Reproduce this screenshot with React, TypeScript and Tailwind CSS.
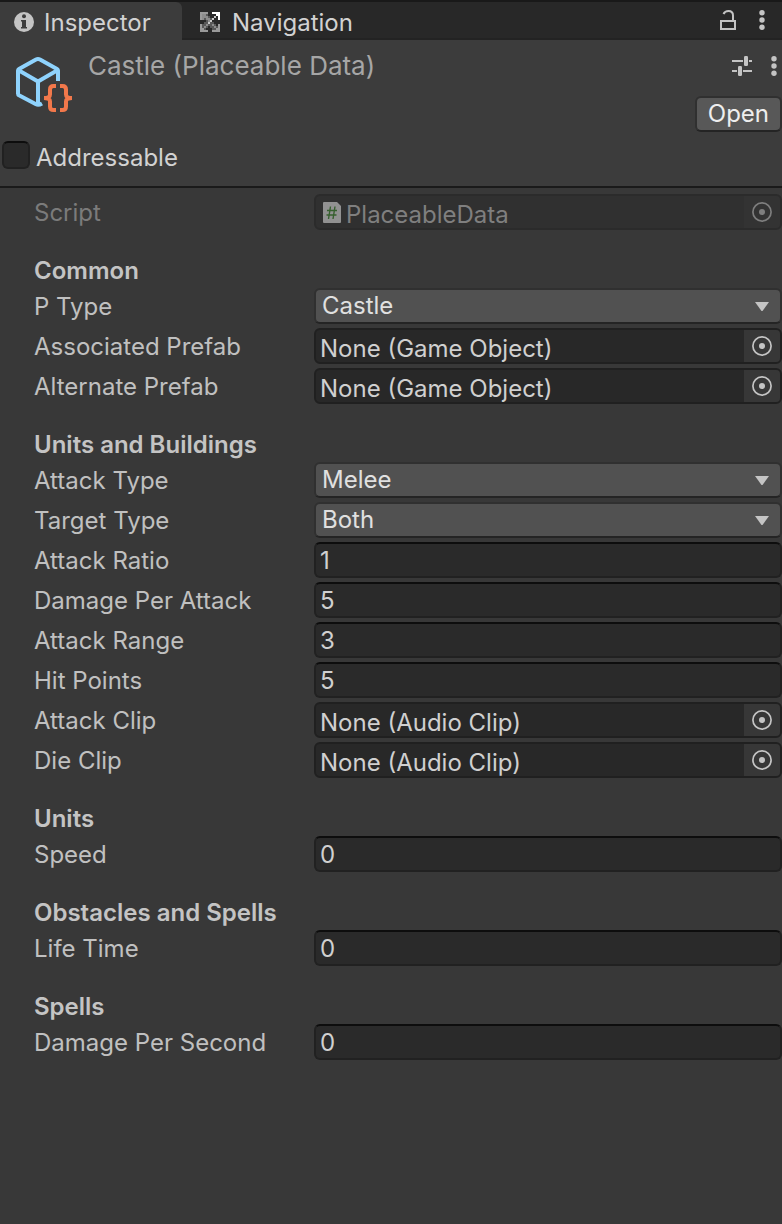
import { useId, type ReactNode } from "react";

function InfoIcon() {
  return (
    <svg viewBox="0 0 20 20" className="size-5 shrink-0" aria-hidden="true">
      <circle cx="10" cy="10" r="10" fill="#c4c4c4" />
      <circle cx="10" cy="4.2" r="2" fill="#3c3c3c" />
      <path d="M7 8h5v7h1v1.6H7V15h1V9.5H7z" fill="#3c3c3c" />
    </svg>
  );
}

function NavigationIcon() {
  return (
    <svg viewBox="0 0 20 20" className="size-5 shrink-0" shapeRendering="crispEdges" aria-hidden="true">
      <path d="M2 4h2V2h4v2h2v2h2v8h2v2h2v2h-4v-2h-2v-2H8v2H6v2H4v-2H2v-4h2v-2h2V8H4V6H2z" fill="#585858" />
      <path d="M12 10h2v2h2v2h2v4h-4v-2h-2z" fill="#585858" />
      <path d="M0 0h8v2H4v2H2v4H0zM0 12h2v4h2v2h4v2H0zM20 20h-8v-2h4v-2h2v-4h2z" fill="#9a9a9a" />
      <path d="M2 2h4v2h2v2h2v4H8V8H6V6H4v2H2zM4 14h2v-2h2v-2h2v2H8v2H6v2H4zM12 12h2v2h2v2h-2v-2h-2z" fill="#8c8c8c" />
      <path d="M8 10h2V8h2V6h2V4h2v2h-2v2h-2v2h-2v2H8z" fill="#c8c8c8" />
      <path d="M12 0h8v8h-2V4h-2V2h-4z" fill="#ffffff" />
      <path d="M16 2h2v2h-2z" fill="#ffffff" />
    </svg>
  );
}

function LockIcon() {
  return (
    <svg viewBox="0 0 16 20" className="h-5 w-4" fill="none" stroke="#c4c4c4" strokeWidth="2" aria-hidden="true">
      <rect x="1" y="11" width="14" height="8" />
      <path d="M3.500 4C4.500 1.800 6.500 1 8.500 1 11.500 1 13 3 13 5.500V11" />
    </svg>
  );
}

function DotsIcon() {
  return (
    <svg viewBox="0 0 6 20" className="h-5 w-1.5" fill="#c4c4c4" aria-hidden="true">
      <circle cx="3" cy="2.700" r="2.700" />
      <circle cx="3" cy="10" r="2.700" />
      <circle cx="3" cy="17.300" r="2.700" />
    </svg>
  );
}

function PresetIcon() {
  return (
    <svg viewBox="0 0 20 20" className="size-5" fill="#c4c4c4" aria-hidden="true">
      <path d="M0 4h11v2H0zM17 4h3v2h-3zM0 14h5v2H0zM11 14h9v2h-9z" />
      <rect x="12" y="0" width="4" height="10" rx="1.200" />
      <rect x="6" y="10" width="4" height="10" rx="1.200" />
    </svg>
  );
}

function AssetIcon() {
  return (
    <svg viewBox="0 0 56 56" className="size-14 shrink-0" fill="none" aria-hidden="true">
      <g stroke="#8fd3fd" strokeWidth="4" strokeLinejoin="round">
        <path d="M42 25V14.500Q42 13.500 41 12.900L24 3.500Q22 2.400 20 3.500L3 12.900Q2 13.500 2 14.500V37.500Q2 38.700 3 39.300L20 48.300Q22.500 49.500 26 47.500" />
        <path d="M3 14.500L22 25.500 41 14.500M22 25.500V48" />
      </g>
      <path
        d="M40 30H37.500Q34 30 34 33.500V38.500Q34 42 28 42Q34 42 34 45.500V50.500Q34 54 37.500 54H40M44 30H46.500Q50 30 50 33.500V38.500Q50 42 56 42Q50 42 50 45.500V50.500Q50 54 46.500 54H44"
        stroke="#f2784b"
        strokeWidth="4"
      />
    </svg>
  );
}

function ScriptIcon() {
  return (
    <svg viewBox="0 0 18 21" className="h-[21px] w-[18px] shrink-0" aria-hidden="true">
      <path d="M1 0H14L18 4V20Q18 21 17 21H1Q0 21 0 20V1Q0 0 1 0Z" fill="#929292" />
      <path d="M7.500 4.500L5.500 17M12 4.500L10 17M4 8.500H14M3.500 13H13.500" stroke="#37602f" strokeWidth="1.400" fill="none" />
    </svg>
  );
}

function PickerIcon() {
  return (
    <svg viewBox="0 0 20 20" className="size-5" aria-hidden="true">
      <circle cx="10" cy="10" r="9.100" fill="none" stroke="currentColor" strokeWidth="1.700" />
      <circle cx="10" cy="10" r="3" fill="currentColor" />
    </svg>
  );
}

function Row({ id, label, dim, children }: { id: string; label: string; dim?: boolean; children: ReactNode }) {
  return (
    <div className="flex h-9 items-center">
      <label htmlFor={id} className={`w-[280px] shrink-0 pt-0.5 ${dim ? "text-[#7b7b7b]" : "text-[#c0c0c0]"}`}>
        {label}
      </label>
      {children}
    </div>
  );
}

function SelectRow({ label, options }: { label: string; options: string[] }) {
  const id = useId();
  return (
    <Row id={id} label={label}>
      <div className="relative h-9 min-w-0 flex-1">
        <select
          id={id}
          defaultValue={options[0]}
          className="h-full w-full appearance-none rounded-md border-2 border-[#303030] border-b-[#242424] bg-[#515151] pr-10 pl-1.5 text-[#e0e0e0]"
        >
          {options.map((option) => (
            <option key={option}>{option}</option>
          ))}
        </select>
        <svg viewBox="0 0 14 9" className="pointer-events-none absolute top-3.5 right-[13px] h-[9px] w-3.5" aria-hidden="true">
          <path d="M0 0H14L7.500 9H6.500Z" fill="#c4c4c4" />
        </svg>
      </div>
    </Row>
  );
}

function NumberRow({ label, value }: { label: string; value: string }) {
  const id = useId();
  return (
    <Row id={id} label={label}>
      <input
        id={id}
        type="text"
        inputMode="decimal"
        defaultValue={value}
        className="h-9 min-w-0 flex-1 rounded-md border-2 border-[#212121] border-t-[#0d0d0d] bg-[#2a2a2a] px-1 text-[#d0d0d0]"
      />
    </Row>
  );
}

function ObjectRow({ label, value }: { label: string; value: string }) {
  const id = useId();
  return (
    <Row id={id} label={label}>
      <div className="flex h-9 min-w-0 flex-1 overflow-hidden rounded-md border-2 border-[#202020] bg-[#282828]">
        <input
          id={id}
          readOnly
          defaultValue={value}
          className="h-8 min-w-0 flex-1 bg-transparent px-1 pt-1 leading-7 text-[#d0d0d0]"
        />
        <button type="button" aria-label={`Select ${label}`} className="grid w-9 place-items-center bg-[#373737] text-[#c4c4c4]">
          <PickerIcon />
        </button>
      </div>
    </Row>
  );
}

function ScriptRow() {
  const id = useId();
  return (
    <Row id={id} label="Script" dim>
      <div className="flex h-9 min-w-0 flex-1 items-center overflow-hidden rounded-md border-2 border-[#2b2b2b] bg-[#303030] pl-[7px]">
        <ScriptIcon />
        <input
          id={id}
          disabled
          defaultValue="PlaceableData"
          className="h-8 min-w-0 flex-1 bg-transparent pt-1 pl-[5px] leading-7 text-[#7f7f7f]"
        />
        <button type="button" disabled aria-label="Select Script" className="grid h-full w-9 place-items-center bg-[#333333] text-[#7e7e7e]">
          <PickerIcon />
        </button>
      </div>
    </Row>
  );
}

function Section({ title, children }: { title: string; children: ReactNode }) {
  return (
    <section className="pt-6">
      <h2 className="h-[34px] leading-[34px] font-semibold text-[#c4c4c4]">{title}</h2>
      <div className="flex flex-col gap-1">{children}</div>
    </section>
  );
}

export default function App() {
  return (
    <div className="min-h-screen bg-[#383838] font-['Inter',sans-serif] text-2xl leading-8">
      <nav className="flex h-10 border-t-2 border-[#191919] bg-[#282828] text-[#d2d2d2]">
        <button type="button" className="flex w-[182px] items-center gap-2.5 rounded-tr-md bg-[#3c3c3c] pt-0.5 pl-3.5">
          <InfoIcon />
          <span className="pt-0.5">Inspector</span>
        </button>
        <button type="button" className="flex items-center gap-3 border-b-2 border-[#232323] pt-1 pl-[18px]">
          <NavigationIcon />
          <span className="pt-0.5">Navigation</span>
        </button>
        <div className="flex flex-1 items-center justify-end gap-[23px] border-b-2 border-[#232323] pr-[17px]">
          <button type="button" aria-label="Lock">
            <LockIcon />
          </button>
          <button type="button" aria-label="Tab menu">
            <DotsIcon />
          </button>
        </div>
      </nav>

      <header className="border-b-2 border-[#1a1a1a] bg-[#3c3c3c]">
        <div className="flex gap-4 pt-2.5 pl-4">
          <div className="pt-1.5">
            <AssetIcon />
          </div>
          <h1 className="flex-1 text-[26px] leading-8 text-[#a6a6a6]">Castle (Placeable Data)</h1>
          <div className="flex flex-col items-end gap-3.5">
            <div className="flex h-8 items-center gap-[19px] pr-[5px]">
              <button type="button" aria-label="Presets">
                <PresetIcon />
              </button>
              <button type="button" aria-label="Asset menu">
                <DotsIcon />
              </button>
            </div>
            <button
              type="button"
              className="h-9 rounded-md border-2 border-[#303030] border-b-[#242424] bg-[#585858] px-[11px] leading-8 text-[#eeeeee]"
            >
              Open
            </button>
          </div>
        </div>
        <label className="mt-[9px] flex h-[45px] items-start gap-1.5 pl-0.5 text-[#d2d2d2]">
          <input
            type="checkbox"
            className="size-7 appearance-none rounded-md border-2 border-[#212121] border-t-[#0d0d0d] bg-[#2a2a2a] checked:bg-[#8a8a8a]"
          />
          <span className="leading-[34px]">Addressable</span>
        </label>
      </header>

      <main className="pt-1.5 pb-10 pl-[34px]">
        <ScriptRow />
        <Section title="Common">
          <SelectRow label="P Type" options={["Castle", "Unit", "Obstacle", "Building", "Spell"]} />
          <ObjectRow label="Associated Prefab" value="None (Game Object)" />
          <ObjectRow label="Alternate Prefab" value="None (Game Object)" />
        </Section>
        <Section title="Units and Buildings">
          <SelectRow label="Attack Type" options={["Melee", "Ranged"]} />
          <SelectRow label="Target Type" options={["Both", "Only Buildings", "None"]} />
          <NumberRow label="Attack Ratio" value="1" />
          <NumberRow label="Damage Per Attack" value="5" />
          <NumberRow label="Attack Range" value="3" />
          <NumberRow label="Hit Points" value="5" />
          <ObjectRow label="Attack Clip" value="None (Audio Clip)" />
          <ObjectRow label="Die Clip" value="None (Audio Clip)" />
        </Section>
        <Section title="Units">
          <NumberRow label="Speed" value="0" />
        </Section>
        <Section title="Obstacles and Spells">
          <NumberRow label="Life Time" value="0" />
        </Section>
        <Section title="Spells">
          <NumberRow label="Damage Per Second" value="0" />
        </Section>
      </main>
    </div>
  );
}
